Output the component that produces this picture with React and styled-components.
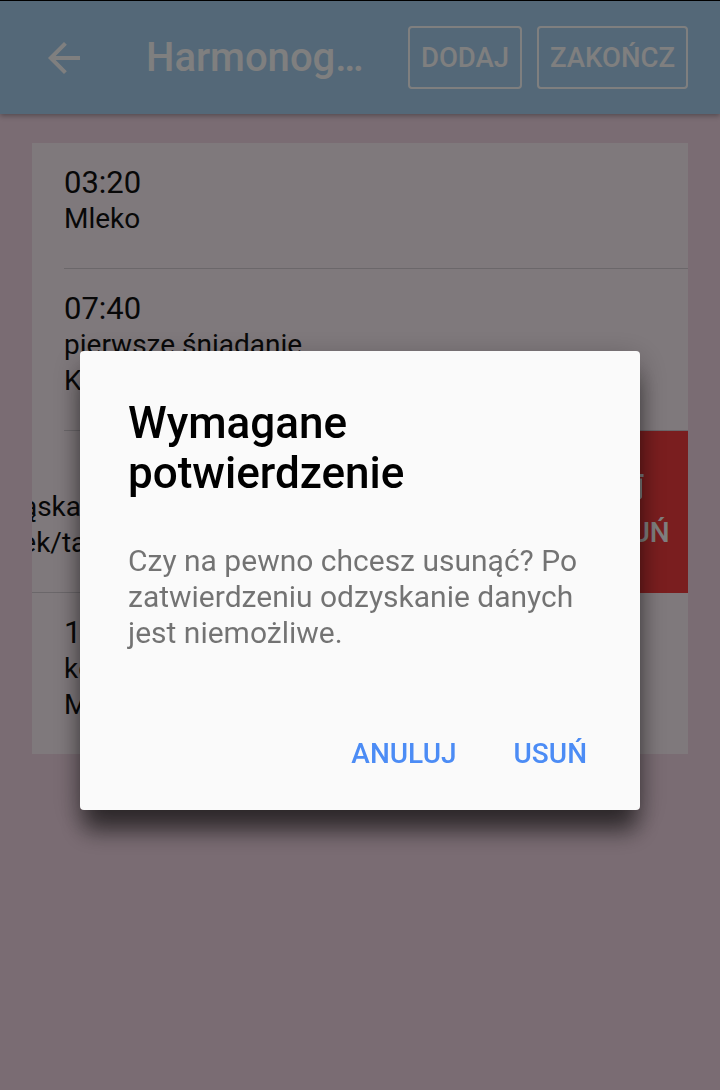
import React from 'react'
import styled, { createGlobalStyle } from 'styled-components'

const meals = [
  { time: '03:20', lines: ['Mleko'] },
  { time: '07:40', lines: ['pierwsze śniadanie', 'Kanapki z twarożkiem'] },
  { time: '10:30', lines: ['przekąska', 'Kisielek/tarta owocowa'], swiped: true },
  { time: '18:00', lines: ['kolacja', 'Makaron z sosem'] },
]

function ArrowBack() {
  return (
    <svg width="48" height="48" viewBox="0 0 24 24" fill="currentColor">
      <path d="M20 11H7.83l5.59-5.59L12 4l-8 8 8 8 1.41-1.41L7.83 13H20v-2z" />
    </svg>
  )
}

function TrashIcon() {
  return (
    <svg width="36" height="36" viewBox="0 0 24 24" fill="currentColor">
      <path d="M6 19c0 1.1.9 2 2 2h8c1.1 0 2-.9 2-2V7H6v12zM19 4h-3.5l-1-1h-5l-1 1H5v2h14V4z" />
    </svg>
  )
}

function MealRow({ meal, last }) {
  return (
    <Row $shift={meal.swiped ? 110 : 0}>
      <RowInner $last={last}>
        <Time>{meal.time}</Time>
        {meal.lines.map((l) => (
          <Line key={l}>{l}</Line>
        ))}
      </RowInner>
    </Row>
  )
}

function App() {
  return (
    <Screen>
      <GlobalStyle />
      <AppBar>
        <BackButton>
          <ArrowBack />
        </BackButton>
        <Title>Harmonogram karmienia</Title>
        <Actions>
          <OutlineButton>DODAJ</OutlineButton>
          <OutlineButton>ZAKOŃCZ</OutlineButton>
        </Actions>
      </AppBar>

      <Content>
        <Card>
          {meals.map((m, i) =>
            m.swiped ? (
              <SwipeRow key={m.time}>
                <DeleteAction>
                  <TrashIcon />
                  <span>USUŃ</span>
                </DeleteAction>
                <MealRow meal={m} last={i === meals.length - 1} />
              </SwipeRow>
            ) : (
              <MealRow key={m.time} meal={m} last={i === meals.length - 1} />
            )
          )}
        </Card>
      </Content>

      <Scrim>
        <Dialog>
          <DialogTitle>Wymagane potwierdzenie</DialogTitle>
          <DialogText>
            Czy na pewno chcesz usunąć? Po zatwierdzeniu odzyskanie danych jest niemożliwe.
          </DialogText>
          <DialogActions>
            <DialogButton>ANULUJ</DialogButton>
            <DialogButton>USUŃ</DialogButton>
          </DialogActions>
        </Dialog>
      </Scrim>
    </Screen>
  )
}

const GlobalStyle = createGlobalStyle`
  html, body {
    margin: 0;
    padding: 0;
    background: #f4d8e6;
    font-family: Roboto, "Noto Sans", sans-serif;
  }
  * { box-sizing: border-box; }
`

const Screen = styled.div`
  width: 720px;
  min-height: 1090px;
  background: #f4d8e6;
  position: relative;
`

const AppBar = styled.header`
  height: 114px;
  border-top: 1px solid #000;
  background: #a8d0f0;
  display: flex;
  align-items: center;
  padding: 0 32px 0 40px;
  color: #fff;
  box-shadow: 0 2px 5px rgba(0, 0, 0, 0.3);
  position: relative;
  z-index: 1;
`

const BackButton = styled.div`
  width: 48px;
  height: 48px;
  display: flex;
  color: #fff;
`

const Title = styled.div`
  margin-left: 58px;
  width: 226px;
  font-size: 40px;
  font-weight: 500;
  white-space: nowrap;
  overflow: hidden;
  text-overflow: ellipsis;
`

const Actions = styled.div`
  margin-left: auto;
  display: flex;
  gap: 15px;
`

const OutlineButton = styled.button`
  height: 63px;
  padding: 0 11px;
  border: 2px solid #fff;
  border-radius: 4px;
  background: transparent;
  color: #fff;
  font-family: Roboto, sans-serif;
  font-size: 27.5px;
  font-weight: 500;
`

const Content = styled.main`
  padding: 29px 32px;
`

const Card = styled.section`
  background: #fef2f8;
  overflow: hidden;
`

const SwipeRow = styled.div`
  position: relative;
  background: #f43c3e;
  overflow: hidden;
`

const DeleteAction = styled.div`
  position: absolute;
  top: 0;
  right: 0;
  bottom: 0;
  width: 110px;
  display: flex;
  flex-direction: column;
  align-items: center;
  justify-content: center;
  gap: 13px;
  padding-bottom: 8px;
  color: #fff;
  font-size: 28px;
  font-weight: 500;
  line-height: 32px;
`

const Row = styled.div`
  position: relative;
  padding-left: 32px;
  background: #fef2f8;
  transform: translateX(${(p) => -p.$shift}px);
`

const RowInner = styled.div`
  padding: 22px 0 31px;
  border-bottom: ${(p) => (p.$last ? 'none' : '1px solid #d6ced4')};
  white-space: nowrap;
`

const Time = styled.div`
  font-size: 31px;
  line-height: 36px;
  color: #111;
`

const Line = styled.div`
  font-size: 28px;
  line-height: 36px;
  color: #111;
`

const Scrim = styled.div`
  position: fixed;
  inset: 0;
  background: rgba(0, 0, 0, 0.5);
  display: flex;
  justify-content: center;
  align-items: flex-start;
  padding-top: 351px;
  z-index: 5;
`

const Dialog = styled.div`
  width: 560px;
  background: #fafafa;
  border-radius: 4px;
  padding: 47px 0 28px;
  box-shadow: 0 24px 22px -4px rgba(0, 0, 0, 0.55), 0 8px 30px rgba(0, 0, 0, 0.28);
`

const DialogTitle = styled.h2`
  margin: 0;
  padding: 0 48px;
  font-size: 44px;
  line-height: 50px;
  font-weight: 500;
  color: #000;
`

const DialogText = styled.p`
  margin: 45px 0 0;
  padding: 0 48px;
  font-size: 30px;
  line-height: 36px;
  color: rgba(0, 0, 0, 0.54);
`

const DialogActions = styled.div`
  margin-top: 75px;
  display: flex;
  justify-content: flex-end;
  gap: 25px;
  padding-right: 37px;
`

const DialogButton = styled.button`
  height: 56px;
  padding: 0 16px;
  border: none;
  background: none;
  color: #4c8cf5;
  font-family: Roboto, sans-serif;
  font-size: 28px;
  line-height: 56px;
  font-weight: 500;
`

export default App
